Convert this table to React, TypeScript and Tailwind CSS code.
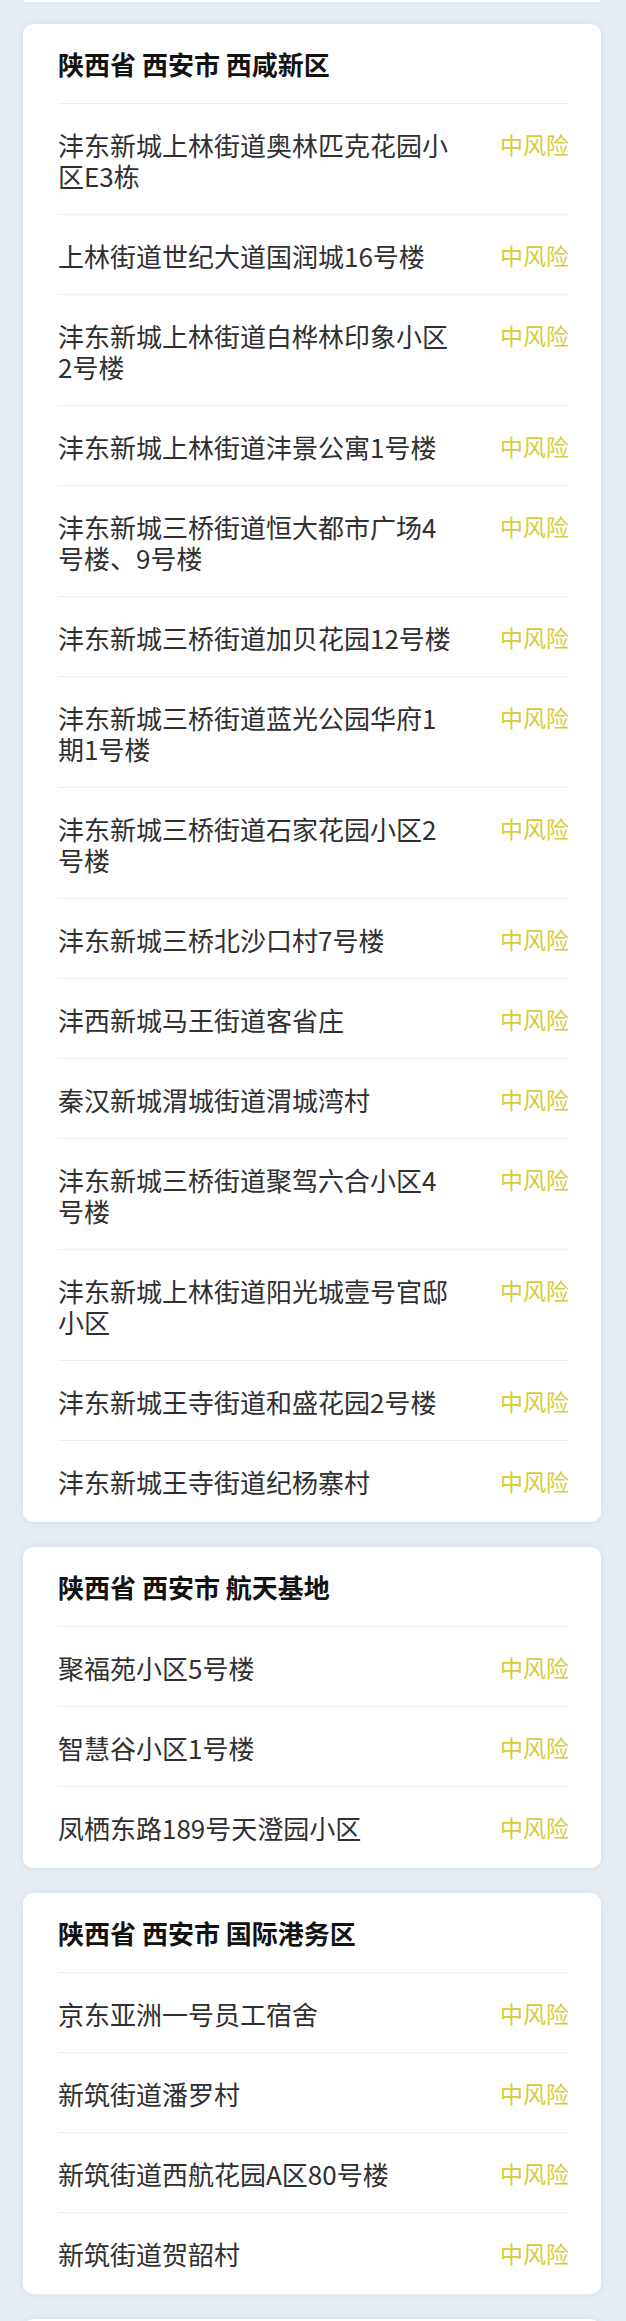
import React from "react";

type Area = {
    title: string;
    places: string[];
};

const areas: Area[] = [
    {
        title: "陕西省 西安市 西咸新区",
        places: [
            "沣东新城上林街道奥林匹克花园小区E3栋",
            "上林街道世纪大道国润城16号楼",
            "沣东新城上林街道白桦林印象小区2号楼",
            "沣东新城上林街道沣景公寓1号楼",
            "沣东新城三桥街道恒大都市广场4号楼、9号楼",
            "沣东新城三桥街道加贝花园12号楼",
            "沣东新城三桥街道蓝光公园华府1期1号楼",
            "沣东新城三桥街道石家花园小区2号楼",
            "沣东新城三桥北沙口村7号楼",
            "沣西新城马王街道客省庄",
            "秦汉新城渭城街道渭城湾村",
            "沣东新城三桥街道聚驾六合小区4号楼",
            "沣东新城上林街道阳光城壹号官邸小区",
            "沣东新城王寺街道和盛花园2号楼",
            "沣东新城王寺街道纪杨寨村",
        ],
    },
    {
        title: "陕西省 西安市 航天基地",
        places: ["聚福苑小区5号楼", "智慧谷小区1号楼", "凤栖东路189号天澄园小区"],
    },
    {
        title: "陕西省 西安市 国际港务区",
        places: ["京东亚洲一号员工宿舍", "新筑街道潘罗村", "新筑街道西航花园A区80号楼", "新筑街道贺韶村"],
    },
];

const AreaCard: React.FC<{ area: Area }> = ({ area }) => {
    return (
        <div className="mt-[25px] bg-white rounded-[10px] shadow-[0_0_6px_rgba(150,170,190,0.25)] pl-[35px] pr-[32px] pb-[2px]">
            <div className="h-[79px] flex items-center text-[26px] font-bold text-[#121212]">
                {area.title}
            </div>
            {area.places.map((place) => (
                <div key={place} className="flex items-start justify-between border-t border-[#eeeeee] pt-[25px] pb-[23px]">
                    <span className="w-[398px] text-[26px] leading-[31px] text-[#303030]">{place}</span>
                    <span className="text-[23px] leading-[31px] text-[#d7cc38]">中风险</span>
                </div>
            ))}
        </div>
    );
};

export default function App() {
    return (
        <div
            className="min-h-screen bg-[#e5edf3] pl-[23px] pr-[25px] pb-4"
            style={{ fontFamily: '"Noto Sans CJK SC", "Noto Sans", sans-serif' }}
        >
            {/* tail of the card above */}
            <div className="h-[2px] -mb-[3px] bg-white rounded-b-[10px] shadow-[0_0_6px_rgba(150,170,190,0.25)]" />
            {areas.map((area) => (
                <AreaCard key={area.title} area={area} />
            ))}
            <div className="mt-[25px] h-[40px] bg-white rounded-t-[10px] shadow-[0_0_6px_rgba(150,170,190,0.25)]" />
        </div>
    );
}
